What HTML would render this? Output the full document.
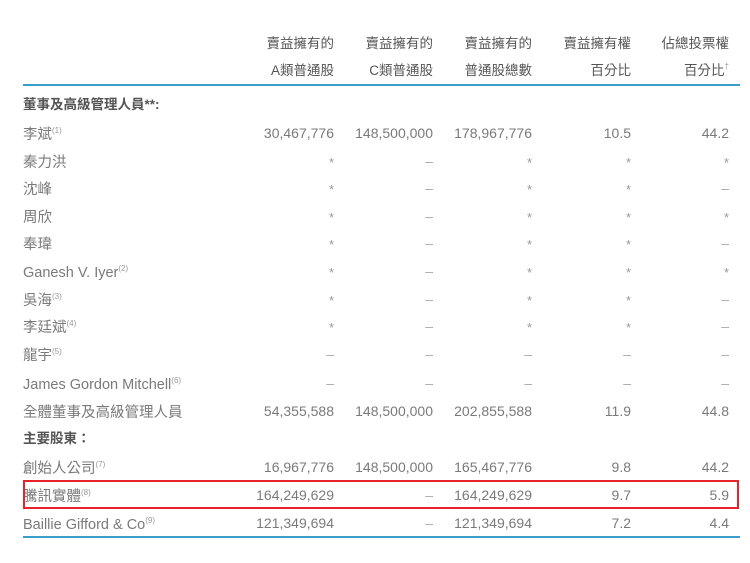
<!DOCTYPE html>
<html><head><meta charset="utf-8"><style>
body{margin:0;width:750px;height:563px;background:#fff;position:relative;overflow:hidden;font-family:"Liberation Sans","Noto Sans CJK TC",sans-serif;color:#7a7a7a;font-size:14px}
.r{position:absolute;left:0;width:750px;height:20px;line-height:20px}
.r span{position:absolute;top:0;white-space:nowrap}
.r span.l{left:23px;font-size:14.5px;top:2px}
.c{text-align:right;width:110px}
.c1{left:224px}.c2{left:323px}.c3{left:422px}.c4{left:521px}.c5{left:619px}
.r span.s{font-size:13px;color:#999;top:2px}
.d{color:#aaa}
sup{font-size:8px;line-height:0;position:relative;top:-6px;vertical-align:baseline;color:#999}
.h{color:#555;font-size:13.5px}
.r span.b{color:#555;font-weight:bold;font-size:13.5px;top:0}
.line{position:absolute;left:23px;width:717px;height:2px;background:#3a9ec8}
.box{position:absolute;left:23px;top:480px;height:29px;border:2px solid #e8242a;box-sizing:border-box;width:716px}
</style></head><body>
<div class="r h" style="top:34px"><span class="c c1">賣益擁有的</span><span class="c c2">賣益擁有的</span><span class="c c3">賣益擁有的</span><span class="c c4">賣益擁有權</span><span class="c c5">佔總投票權</span></div>
<div class="r h" style="top:61px"><span class="c c1">A類普通股</span><span class="c c2">C類普通股</span><span class="c c3">普通股總數</span><span class="c c4">百分比</span><span class="c c5">百分比<sup>†</sup></span></div>
<div class="line" style="top:84px"></div>
<div class="r" style="top:95px"><span class="l b">董事及高級管理人員**:</span></div>
<div class="r" style="top:123px"><span class="l">李斌<sup>(1)</sup></span><span class="c c1">30,467,776</span><span class="c c2">148,500,000</span><span class="c c3">178,967,776</span><span class="c c4">10.5</span><span class="c c5">44.2</span></div>
<div class="r" style="top:151px"><span class="l">秦力洪</span><span class="c c1 s">*</span><span class="c c2 d">–</span><span class="c c3 s">*</span><span class="c c4 s">*</span><span class="c c5 s">*</span></div>
<div class="r" style="top:178px"><span class="l">沈峰</span><span class="c c1 s">*</span><span class="c c2 d">–</span><span class="c c3 s">*</span><span class="c c4 s">*</span><span class="c c5 d">–</span></div>
<div class="r" style="top:206px"><span class="l">周欣</span><span class="c c1 s">*</span><span class="c c2 d">–</span><span class="c c3 s">*</span><span class="c c4 s">*</span><span class="c c5 s">*</span></div>
<div class="r" style="top:233px"><span class="l">奉瑋</span><span class="c c1 s">*</span><span class="c c2 d">–</span><span class="c c3 s">*</span><span class="c c4 s">*</span><span class="c c5 d">–</span></div>
<div class="r" style="top:261px"><span class="l">Ganesh V. Iyer<sup>(2)</sup></span><span class="c c1 s">*</span><span class="c c2 d">–</span><span class="c c3 s">*</span><span class="c c4 s">*</span><span class="c c5 s">*</span></div>
<div class="r" style="top:289px"><span class="l">吳海<sup>(3)</sup></span><span class="c c1 s">*</span><span class="c c2 d">–</span><span class="c c3 s">*</span><span class="c c4 s">*</span><span class="c c5 d">–</span></div>
<div class="r" style="top:316px"><span class="l">李廷斌<sup>(4)</sup></span><span class="c c1 s">*</span><span class="c c2 d">–</span><span class="c c3 s">*</span><span class="c c4 s">*</span><span class="c c5 d">–</span></div>
<div class="r" style="top:344px"><span class="l">龍宇<sup>(5)</sup></span><span class="c c1 d">–</span><span class="c c2 d">–</span><span class="c c3 d">–</span><span class="c c4 d">–</span><span class="c c5 d">–</span></div>
<div class="r" style="top:373px"><span class="l">James Gordon Mitchell<sup>(6)</sup></span><span class="c c1 d">–</span><span class="c c2 d">–</span><span class="c c3 d">–</span><span class="c c4 d">–</span><span class="c c5 d">–</span></div>
<div class="r" style="top:401px"><span class="l">全體董事及高級管理人員</span><span class="c c1">54,355,588</span><span class="c c2">148,500,000</span><span class="c c3">202,855,588</span><span class="c c4">11.9</span><span class="c c5">44.8</span></div>
<div class="r" style="top:429px"><span class="l b">主要股東：</span></div>
<div class="r" style="top:457px"><span class="l">創始人公司<sup>(7)</sup></span><span class="c c1">16,967,776</span><span class="c c2">148,500,000</span><span class="c c3">165,467,776</span><span class="c c4">9.8</span><span class="c c5">44.2</span></div>
<div class="r" style="top:485px"><span class="l">騰訊實體<sup>(8)</sup></span><span class="c c1">164,249,629</span><span class="c c2 d">–</span><span class="c c3">164,249,629</span><span class="c c4">9.7</span><span class="c c5">5.9</span></div>
<div class="r" style="top:513px"><span class="l">Baillie Gifford &amp; Co<sup>(9)</sup></span><span class="c c1">121,349,694</span><span class="c c2 d">–</span><span class="c c3">121,349,694</span><span class="c c4">7.2</span><span class="c c5">4.4</span></div>
<div class="box"></div>
<div class="line" style="top:536px"></div>
</body></html>
